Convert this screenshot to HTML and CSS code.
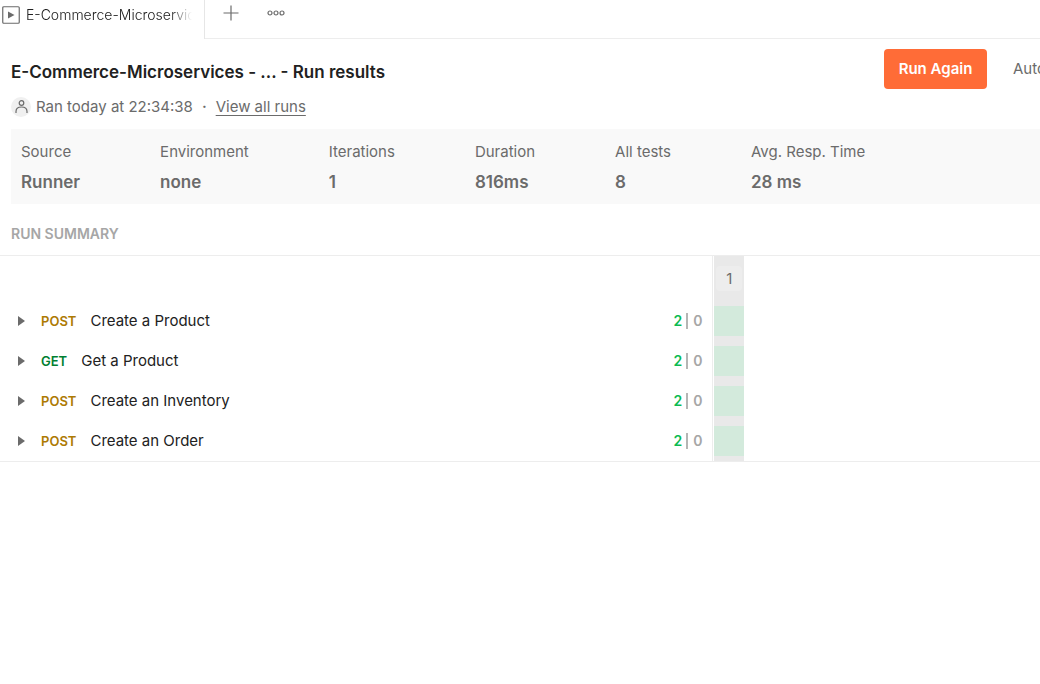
FILE: index.html
```html
<!DOCTYPE html>
<html lang="en">
<head>
<meta charset="utf-8">
<title>Run results</title>
<link rel="stylesheet" href="styles.css">
</head>
<body>
<nav class="tabs">
  <a class="tab" href="#run">
    <svg class="tab-icon" width="18" height="18" viewBox="0 0 18 18"><rect x=".75" y=".75" width="16.5" height="16.5" rx="1" fill="none" stroke="#6b6b6b" stroke-width="1.200"/><path d="M6 5.500v7l6.500-3.500z" fill="#6b6b6b"/></svg>
    <span class="tab-name">E-Commerce-Microservices</span>
  </a>
  <div class="tab-tools">
    <button class="icon-button" aria-label="New tab"><svg width="16" height="16" viewBox="0 0 16 16"><path d="M8 .5v15M.5 8h15" stroke="#6b6b6b" stroke-width="1.200"/></svg></button>
    <button class="icon-button" aria-label="More tabs"><svg width="18" height="8" viewBox="0 0 18 8"><g fill="none" stroke="#6b6b6b" stroke-width="1.200"><circle cx="3" cy="4" r="2"/><circle cx="9" cy="4" r="2"/><circle cx="15" cy="4" r="2"/></g></svg></button>
  </div>
</nav>
<main id="run">
  <header class="header">
    <div class="heading">
      <h1>E-Commerce-Microservices - ... - Run results</h1>
      <p class="ran">
        <svg width="20" height="20" viewBox="0 0 20 20"><circle cx="10" cy="10" r="10" fill="#f0f0f0"/><g fill="none" stroke="#6b6b6b" stroke-width="1.200"><circle cx="10.500" cy="6" r="2.300"/><path d="M5 16v-1.500c0-2.800 2.300-4.500 5.500-4.500s5.500 1.700 5.500 4.500V16"/></g></svg>
        <span>Ran today at 22:34:38</span><span class="dot">·</span><a href="#runs">View all runs</a>
      </p>
    </div>
    <div class="actions">
      <button class="primary">Run Again</button>
      <button class="plain">Auto</button>
    </div>
  </header>
  <dl class="stats">
    <div><dt>Source</dt><dd>Runner</dd></div>
    <div><dt>Environment</dt><dd>none</dd></div>
    <div><dt>Iterations</dt><dd>1</dd></div>
    <div><dt>Duration</dt><dd>816ms</dd></div>
    <div><dt>All tests</dt><dd>8</dd></div>
    <div><dt>Avg. Resp. Time</dt><dd>28 ms</dd></div>
  </dl>
  <h2>RUN SUMMARY</h2>
  <table class="summary">
    <thead>
      <tr><td class="request"></td><th class="iteration" scope="col"><div class="lane lane-head"><span>1</span></div></th><td></td></tr>
    </thead>
    <tbody>
      <tr><td class="request"><div class="row"><button class="toggle" aria-label="Expand"></button><span class="method post">POST</span><span class="name">Create a Product</span><span class="count"><b>2</b><i></i>0</span></div></td><td class="iteration"><div class="lane"><div class="pass"></div></div></td><td></td></tr>
      <tr><td class="request"><div class="row"><button class="toggle" aria-label="Expand"></button><span class="method get">GET</span><span class="name">Get a Product</span><span class="count"><b>2</b><i></i>0</span></div></td><td class="iteration"><div class="lane"><div class="pass"></div></div></td><td></td></tr>
      <tr><td class="request"><div class="row"><button class="toggle" aria-label="Expand"></button><span class="method post">POST</span><span class="name">Create an Inventory</span><span class="count"><b>2</b><i></i>0</span></div></td><td class="iteration"><div class="lane"><div class="pass"></div></div></td><td></td></tr>
      <tr><td class="request"><div class="row"><button class="toggle" aria-label="Expand"></button><span class="method post">POST</span><span class="name">Create an Order</span><span class="count"><b>2</b><i></i>0</span></div></td><td class="iteration"><div class="lane"><div class="pass"></div></div></td><td></td></tr>
    </tbody>
  </table>
</main>
</body>
</html>
```
FILE: styles.css
```css
* { box-sizing: border-box; }
body {
  margin: 0;
  font: 400 15px/20px Inter, "Liberation Sans", sans-serif;
  color: #6b6b6b;
  background: #fff;
  overflow-x: hidden;
}
h1, h2, p, dl, dd { margin: 0; }
button { border: 0; padding: 0; background: none; font: inherit; color: inherit; }
svg { display: block; flex: none; }

.tabs { display: flex; height: 39px; }
.tab {
  display: flex;
  gap: 6px;
  flex: 0 0 205px;
  min-width: 0;
  padding: 5px 12px 0 2px;
  border-right: 1px solid #e6e6e6;
  color: #212121;
  font-size: 14px;
  font-weight: 300;
  text-decoration: none;
}
.tab-icon { margin-top: 1px; }
.tab-name {
  flex: 1;
  min-width: 0;
  overflow: hidden;
  white-space: nowrap;
  mask-image: linear-gradient(to left, transparent, #000 22px);
}
.tab-tools {
  display: flex;
  flex: 1;
  align-items: flex-start;
  gap: 28px;
  padding: 5px 18px 0;
  border-bottom: 1px solid #ededed;
}
.icon-button { display: grid; place-items: center; height: 16px; }

.header {
  display: flex;
  justify-content: space-between;
  padding: 10px 0 0 11px;
  height: 90px;
}
h1 { font-size: 17px; line-height: 24px; font-weight: 600; color: #212121; margin-top: 11px; }
.ran { display: flex; align-items: center; margin-top: 13px; }
.ran svg { margin-right: 5px; }
.dot { margin: 0 9px; font-weight: 600; }
.ran a { color: inherit; text-decoration: underline; text-underline-offset: 3px; }
.actions { display: flex; align-items: flex-start; gap: 26px; flex: 0 0 156px; overflow: hidden; }
.actions button { height: 40px; white-space: nowrap; }
.actions .primary {
  flex: 0 0 103px;
  border-radius: 4px;
  background: #ff6c37;
  color: #fff;
  font-weight: 600;
}

.stats {
  display: flex;
  gap: 80px;
  margin-left: 11px;
  padding: 13px 10px 11px;
  background: #f9f9f9;
  white-space: nowrap;
}
dd { margin-top: 9px; font-size: 17px; line-height: 22px; font-weight: 600; }
h2 { padding: 20px 11px 11px; font-size: 14px; font-weight: 600; color: #a6a6a6; }

.summary {
  width: 100%;
  table-layout: fixed;
  border-collapse: separate;
  border-spacing: 0;
  border-top: 1px solid #ededed;
  border-bottom: 1px solid #ededed;
}
.summary td, .summary th { padding: 0; }
.summary .request { width: 68.5%; }
.summary .iteration { width: 32px; padding-left: 1px; border-left: 1px solid #ededed; }
.row { display: flex; align-items: center; height: 40px; padding: 0 10px 0 18px; }
.toggle {
  width: 7px;
  height: 10px;
  background: #6b6b6b;
  clip-path: polygon(0 0, 100% 50%, 0 100%);
}
.method { margin: 0 14px 0 16px; font-size: 13px; font-weight: 600; }
.post { color: #ad7a03; }
.get { color: #007f31; }
.name { flex: 1; color: #212121; }
.count { display: flex; align-items: center; font-size: 14px; font-weight: 600; color: #a6a6a6; }
.count b { font-weight: 600; color: #0cbb52; }
.count i { width: 2px; height: 16px; margin: 0 5px 0 4px; background: #b5b5b5; }
.lane { width: 30px; height: 40px; padding: 5px 0; background: #e9e9e9; }
.lane-head { height: 45px; padding: 10px 2px; }
.lane-head span { display: block; border-radius: 4px; background: #ededed; font-weight: 400; line-height: 25px; }
.pass { height: 30px; background: #d3eadc; }
```
